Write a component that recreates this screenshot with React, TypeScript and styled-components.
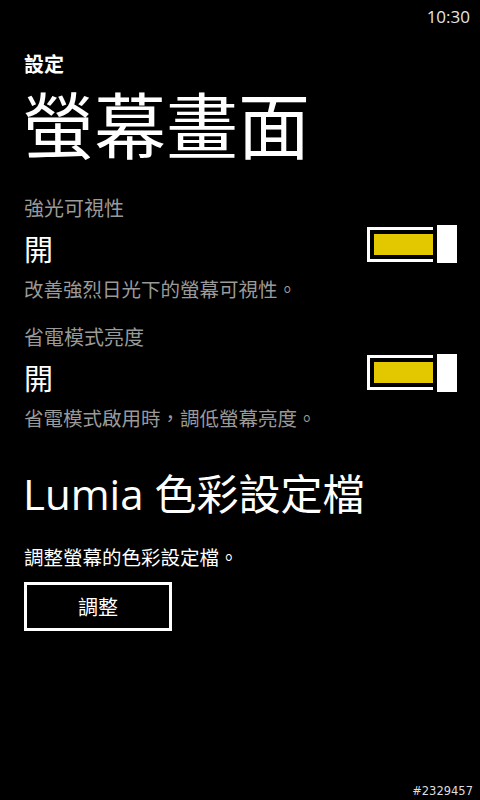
import React from 'react';
import styled, { createGlobalStyle } from 'styled-components';

const GlobalStyle = createGlobalStyle`
  html, body {
    margin: 0;
    padding: 0;
    background: #000;
  }
  body {
    font-family: "Open Sans", "Noto Sans CJK TC", sans-serif;
    color: #fff;
  }
`;

const Screen = styled.div`
  position: relative;
  width: 480px;
  height: 800px;
  background: #000;
  overflow: hidden;
`;

const StatusBar = styled.div`
  height: 32px;
  display: flex;
  justify-content: flex-end;
  align-items: center;
  padding-right: 10px;
`;

const Clock = styled.span`
  font-family: "Open Sans", sans-serif;
  font-size: 17px;
  color: #e6e6e6;
  line-height: 1;
`;

const Content = styled.div`
  padding: 0 24px;
`;

const AppName = styled.div`
  margin-top: 22px;
  font-family: "Noto Sans CJK TC", sans-serif;
  font-weight: 700;
  font-size: 20px;
  line-height: 1;
`;

const PageTitle = styled.h1`
  margin: 12px 0 0 -2px;
  font-family: "Noto Sans CJK TC", sans-serif;
  font-weight: 400;
  font-size: 72px;
  line-height: 1;
`;

const SettingList = styled.div`
  margin-top: 40px;
  display: flex;
  flex-direction: column;
  gap: 28px;
`;

const Setting = styled.div`
  display: flex;
  flex-direction: column;
`;

const Label = styled.div`
  font-family: "Noto Sans CJK TC", sans-serif;
  font-size: 20px;
  line-height: 1;
  color: #9a9a9a;
`;

const ValueRow = styled.div`
  display: flex;
  align-items: flex-end;
  justify-content: space-between;
  margin: 7px 0 16px;
`;

const Value = styled.div`
  font-family: "Noto Sans CJK TC", sans-serif;
  font-size: 29px;
  line-height: 1;
`;

const Toggle = styled.div`
  display: flex;
  align-items: center;
  gap: 4px;
  margin-right: -1px;
`;

const Track = styled.div<{ $on: boolean }>`
  width: 59px;
  height: 21px;
  border: 3px solid #fff;
  border-right: none;
  padding: 4px 0 4px 4px;
  box-sizing: content-box;
  display: flex;

  &::after {
    content: '';
    flex: 1;
    background: ${(p) => (p.$on ? '#e3c800' : 'transparent')};
  }
`;

const Thumb = styled.div`
  width: 20px;
  height: 38px;
  background: #fff;
`;

const Section = styled.div`
  margin-top: 46px;
`;

const SectionTitle = styled.h2`
  margin: 0 0 0 -1px;
  font-family: "Open Sans", "Noto Sans CJK TC", sans-serif;
  font-weight: 400;
  font-size: 42px;
  line-height: 1;
`;

const Description = styled.p<{ $light?: boolean }>`
  margin: 0;
  font-family: "Noto Sans CJK TC", sans-serif;
  font-size: 19.5px;
  line-height: 1;
  color: ${(p) => (p.$light ? '#fff' : '#9a9a9a')};
`;

const SectionDescription = styled(Description)`
  margin-top: 32px;
`;

const ActionButton = styled.button`
  margin-top: 15px;
  width: 148px;
  height: 49px;
  background: transparent;
  border: 3px solid #fff;
  color: #fff;
  font-family: "Noto Sans CJK TC", sans-serif;
  font-size: 20px;
  padding: 0;
  cursor: pointer;
`;

const Watermark = styled.div`
  position: absolute;
  right: 7px;
  bottom: 2px;
  font-family: "DejaVu Sans", sans-serif;
  font-size: 11.5px;
  color: #ddd;
`;

interface ToggleSettingProps {
  label: string;
  value: string;
  description: string;
  on: boolean;
}

const ToggleSetting: React.FC<ToggleSettingProps> = ({ label, value, description, on }) => (
  <Setting>
    <Label>{label}</Label>
    <ValueRow>
      <Value>{value}</Value>
      <Toggle>
        <Track $on={on} />
        <Thumb />
      </Toggle>
    </ValueRow>
    <Description>{description}</Description>
  </Setting>
);

const settings: ToggleSettingProps[] = [
  { label: '強光可視性', value: '開', description: '改善強烈日光下的螢幕可視性。', on: true },
  { label: '省電模式亮度', value: '開', description: '省電模式啟用時，調低螢幕亮度。', on: true },
];

const App: React.FC = () => (
  <Screen>
    <GlobalStyle />
    <StatusBar>
      <Clock>10:30</Clock>
    </StatusBar>
    <Content>
      <AppName>設定</AppName>
      <PageTitle>螢幕畫面</PageTitle>
      <SettingList>
        {settings.map((s) => (
          <ToggleSetting key={s.label} {...s} />
        ))}
      </SettingList>
      <Section>
        <SectionTitle>Lumia 色彩設定檔</SectionTitle>
        <SectionDescription $light>調整螢幕的色彩設定檔。</SectionDescription>
        <ActionButton>調整</ActionButton>
      </Section>
    </Content>
    <Watermark>#2329457</Watermark>
  </Screen>
);

export default App;
